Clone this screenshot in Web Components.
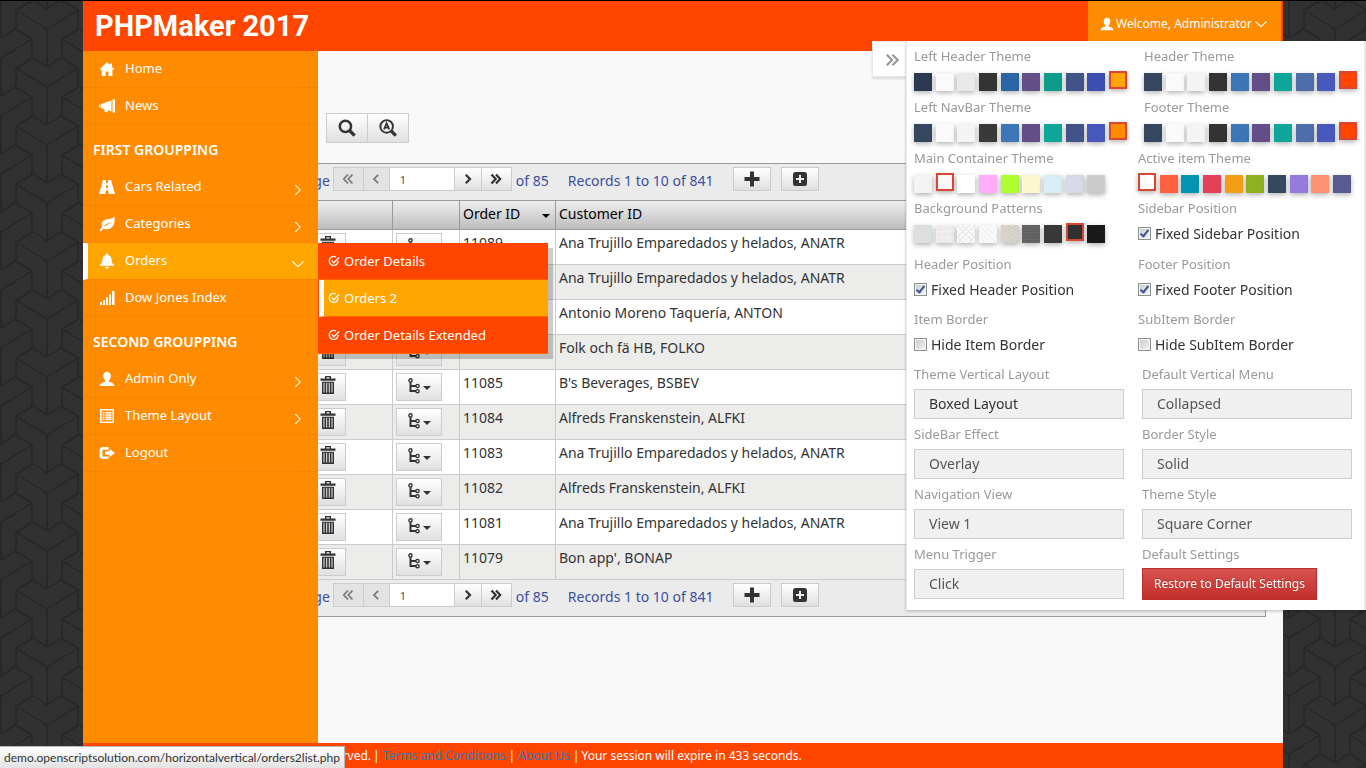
<!DOCTYPE html>
<html lang="en">
<head>
<meta charset="utf-8">
<title>PHPMaker 2017 - Orders</title>
<style>
html,body{margin:0;padding:0;height:100%}
body{box-sizing:border-box;border-top:1px solid #000;background:#303030;overflow:hidden;
font-family:"Noto Sans","Open Sans",sans-serif;font-size:14px;line-height:20px;color:#333}
</style>
</head>
<body>
<cube-backdrop></cube-backdrop>
<app-shell>
  <app-header slot="header"></app-header>
  <side-nav slot="nav">
    <nav-item icon="home">Home</nav-item>
    <nav-item icon="news">News</nav-item>
    <nav-heading>FIRST GROUPPING</nav-heading>
    <nav-item icon="road" arrow="right">Cars Related</nav-item>
    <nav-item icon="leaf" arrow="right">Categories</nav-item>
    <nav-item icon="bell" arrow="down" active>Orders
      <sub-menu slot="menu">
        <sub-item>Order Details</sub-item>
        <sub-item active>Orders 2</sub-item>
        <sub-item>Order Details Extended</sub-item>
      </sub-menu>
    </nav-item>
    <nav-item icon="bars">Dow Jones Index</nav-item>
    <nav-heading>SECOND GROUPPING</nav-heading>
    <nav-item icon="user" arrow="right">Admin Only</nav-item>
    <nav-item icon="list" arrow="right">Theme Layout</nav-item>
    <nav-item icon="logout">Logout</nav-item>
  </side-nav>
  <orders-view></orders-view>
  <page-footer slot="footer"></page-footer>
</app-shell>
<theme-settings></theme-settings>
<link-status>demo.openscriptsolution.com/horizontalvertical/orders2list.php</link-status>

<script>
const ICONS = {
  home:'<path d="M8 1 0.5 8.6h2.2V15h4v-4.6h2.7V15h4V8.6h2.1L13 6V2.4h-2V4z"/>',
  news:'<path d="M0 7 1.500 6.300v3.400L0 9zM2 6 12.500 2.500v11L8.600 12v2.600L5.500 13.800v-2.500L2 10zM13.500 1.500H16v13h-2.500z"/>',
  road:'<path d="M4 1h3v3h2V1h3l4 14H9.6l-.4-3.5H6.8L6.4 15H0zM7.2 6 7 9h2l-.2-3z" fill-rule="evenodd"/>',
  leaf:'<path d="M15.5.8C16 6 15 11 11 12.600c-2.600 1-5 .6-6.500-.1L2 15.500.6 14.200 3 11.300C1.600 7.500 3.800 4.500 7 3.600 10 2.700 13 3.200 15.500.8zM4.800 10.600C7 9.600 10 8.300 12.400 5.600 9 7.600 6 8.400 4 10.800z" fill-rule="evenodd"/>',
  bell:'<path d="M8 0.500c1 0 1.300.7 1.200 1.500C11.500 2.700 12.500 4.500 12.600 7c.1 2.300.5 3.300 2.200 4.600.5.5.3 1.200-.4 1.200H1.600c-.7 0-.9-.7-.4-1.200C2.900 10.300 3.300 9.300 3.400 7c.1-2.500 1.100-4.300 3.400-5C6.700 1.200 7 .5 8 .5zM6 13.700h4C10 15 9 15.600 8 15.600S6 15 6 13.700z"/>',
  bars:'<path d="M1 12h2v3H1zM4 10h2v5H4zM7 7.500h2V15H7zM10 4.500h2V15h-2zM13 1h2.500v14H13z"/>',
  user:'<path d="M8 .8c2.400 0 3.800 1.700 3.800 4 0 2-.8 3.700-1.900 4.700v1.300c2.500.9 4.700 1.400 5.100 2.800.2.700.2 1.200.2 1.400H.8c0-.3 0-.8.2-1.400.4-1.400 2.600-1.900 5.100-2.800V9.500c-1.100-1-1.900-2.700-1.900-4.700 0-2.300 1.400-4 3.800-4z"/>',
  list:'<path d="M1 1h14v14H1zM2.500 2.500v11h11v-11zM3.500 4h2v1.500h-2zM6.500 4h6v1.500h-6zM3.500 6.200h2v1.500h-2zM6.500 6.200h6v1.500h-6zM3.500 8.400h2v1.500h-2zM6.500 8.400h6v1.500h-6zM3.500 10.600h2v1.500h-2zM6.500 10.600h6v1.500h-6z" fill-rule="evenodd"/>',
  logout:'<path d="M9.500 2v2.800H4.500c-.8 0-1 .3-1 1v4.600c0 .7.200 1 1 1h5V14H4.300C1.700 14 .5 12.800.5 10.500v-5C.5 3.200 1.700 2 4.300 2zM10.500 4 16 8l-5.500 4V9.700H6.200V6.300h4.300z"/>',
  right:'<path d="M5 2.500 10.500 8 5 13.500" fill="none" stroke="currentColor" stroke-width="1.200"/>',
  down:'<path d="M1.500 5 8 11l6.500-6" fill="none" stroke="currentColor" stroke-width="1.300"/>',
  tick:'<path d="M13.600 8A6 6 0 1 1 10.500 2.600M4.800 7.200 7.800 10.400 14.800 3.400" fill="none" stroke="currentColor" stroke-width="1.700"/>',
  search:'<circle cx="6.600" cy="6.600" r="5" fill="none" stroke="currentColor" stroke-width="2.200"/><path d="M10.300 10.300 14.800 14.800" stroke="currentColor" stroke-width="3"/>',
  searcha:'<circle cx="6.800" cy="6.600" r="5.600" fill="none" stroke="currentColor" stroke-width="1.700"/><path d="M10.800 10.600 15 14.800" stroke="currentColor" stroke-width="3"/><path d="M4.400 9.300 6.800 3.700 9.200 9.300M5.200 7.600h3.200" fill="none" stroke="currentColor" stroke-width="1.500"/>',
  first:'<path d="M8 3.500 3.800 8 8 12.500M12.500 3.500 8.300 8l4.200 4.500" fill="none" stroke="currentColor" stroke-width="1.700"/>',
  prev:'<path d="M10.200 3.800 6 8l4.200 4.200" fill="none" stroke="currentColor" stroke-width="1.700"/>',
  next:'<path d="M5.800 3.800 10 8l-4.200 4.200" fill="none" stroke="currentColor" stroke-width="2.200"/>',
  last:'<path d="M3.500 3.500 7.700 8l-4.200 4.500M8 3.500 12.200 8 8 12.500" fill="none" stroke="currentColor" stroke-width="2.200"/>',
  shut:'<path d="M2 2 8 8l-6 6M8.500 2l6 6-6 6" fill="none" stroke="currentColor" stroke-width="2.600"/>',
  plus:'<path d="M6 .5h4V6h5.500v4H10v5.500H6V10H.5V6H6z"/>',
  plusbox:'<path d="M3.500 1h9A2.500 2.500 0 0 1 15 3.500v9a2.500 2.500 0 0 1-2.500 2.500h-9A2.500 2.500 0 0 1 1 12.500v-9A2.500 2.500 0 0 1 3.500 1zM7 4v3H4v2h3v3h2V9h3V7H9V4z" fill-rule="evenodd"/>',
  trash:'<path d="M5 0h6v2.200H15.500V4.200H.5v-2H5zM6.500 1.200v1h3v-1zM2 5h12V16H2zM3.500 6v8.700h1V6zM6.200 6v8.700h1V6zM8.800 6v8.700h1V6zM11.500 6v8.700h1V6z" fill-rule="evenodd"/>',
  tree:'<path d="M3.500 4.200v8.800h5.500M3.500 8h5.500" fill="none" stroke="currentColor" stroke-width="2"/><g fill="none" stroke="currentColor" stroke-width="1.400"><circle cx="3.500" cy="2.400" r="1.600"/><circle cx="10.500" cy="8" r="1.600"/><circle cx="10.500" cy="13.200" r="1.600"/></g>'
};
/* Registers an element whose open shadow root is cloned from a template. */
function element(name, css, html, setup){
  customElements.define(name, class extends HTMLElement{
    connectedCallback(){
      if(this.shadowRoot) return;
      const t=document.createElement('template');
      t.innerHTML=`<style>*{box-sizing:border-box}button,input,select{font:inherit;color:inherit;margin:0}${css}</style>`+
        (typeof html==='function'?html(this):html);
      this.attachShadow({mode:'open'}).append(t.content.cloneNode(true));
      if(setup) setup(this);
    }
  });
}
const icon=(n,s='')=>`<glyph-icon name="${n}" ${s}></glyph-icon>`;

element('glyph-icon',`:host{display:inline-block;width:16px;height:16px;flex:none}svg{display:block;width:100%;height:100%}`,
  h=>`<svg viewBox="0 0 16 16" preserveAspectRatio="none" fill="currentColor" aria-hidden="true">${ICONS[h.getAttribute('name')]}</svg>`);

element('cube-backdrop',`:host{position:fixed;inset:1px 0 0 0;z-index:-1;background:#313131}svg{display:block;width:100%;height:100%}`,
  `<svg aria-hidden="true"><defs>
    <g id="y" fill="none" stroke="#282828" stroke-width="2"><path d="M-31-19V1M31-19V1M-31-19 0 0 31-19M0 0V38M-15 10V28L0 38 15 28V10M-31-19-15-29M31-19 15-29M-15 10-31 1M15 10 31 1"/></g>
    <pattern id="p" width="92" height="58" patternUnits="userSpaceOnUse">
      <use href="#y" x="47" y="28"/><use href="#y" x="47" y="-30"/><use href="#y" x="47" y="86"/>
      <use href="#y" x="1" y="57"/><use href="#y" x="1" y="-1"/><use href="#y" x="93" y="57"/><use href="#y" x="93" y="-1"/>
    </pattern></defs><rect width="100%" height="100%" fill="url(#p)"/></svg>`);

element('app-shell',`:host{display:flex;flex-direction:column;height:100%;max-width:1200px;margin:0 auto;background:#f9f9f9}
  .body{flex:1;display:grid;min-height:0}
  slot[name=nav]::slotted(*){grid-area:1/1;justify-self:start;z-index:2}
  .body slot:not([name])::slotted(*){grid-area:1/1}`,
  `<slot name="header"></slot><div class="body"><slot></slot><slot name="nav"></slot></div><slot name="footer"></slot>`);

element('app-header',`:host{display:flex;justify-content:space-between;height:50px;background:#ff4500;color:#fff;padding-right:2px}
  h1{margin:0;padding-left:12px;font:bold 29px/50px "Roboto",sans-serif}
  a{display:flex;align-items:center;gap:2px;width:193px;padding:0 12px;background:#ff8c00;color:#fff;text-decoration:none;font-size:12px;padding-bottom:4px}
  glyph-icon{width:14px;height:14px}`,
  `<h1>PHPMaker 2017</h1><a href="#">${icon('user')}<span>Welcome, Administrator</span>${icon('down')}</a>`);

element('side-nav',`:host{display:block;width:235px;background:#ff8c00;color:#fff;font-size:13px}`,`<nav><slot></slot></nav>`);

element('nav-heading',`:host{display:block}h2{margin:0;padding:5px 10px 0;font:inherit;font-size:14px;font-weight:600;line-height:39px}`,`<h2><slot></slot></h2>`);

element('nav-item',`:host{display:block;position:relative}
  a{display:flex;align-items:center;height:37px;padding:0 13px 0 16px;border-bottom:1px solid #fb8100;color:inherit;text-decoration:none}
  span{flex:1;padding:0 0 2px 10px}
  .arrow{width:14px;height:14px;margin-top:5px}
  :host([active]) a{background:#ffa500;border-left:5px solid #fff;padding-left:11px}
  ::slotted(sub-menu){position:absolute;left:100%;top:0}`,
  h=>`<a href="#">${icon(h.getAttribute('icon'))}<span><slot></slot></span>${h.hasAttribute('arrow')?icon(h.getAttribute('arrow'),'class="arrow"'):''}</a><slot name="menu"></slot>`);

element('sub-menu',`:host{display:block;width:230px;background:#ff4500;box-shadow:5px 5px 0 rgba(0,0,0,.2)}`,`<slot></slot>`);

element('sub-item',`:host{display:block}
  a{display:flex;align-items:center;gap:4px;height:37px;padding:0 10px;border-bottom:1px solid #ff6a00;color:#fff;text-decoration:none}
  glyph-icon{width:12px;height:12px}
  :host([active]) a{margin-left:1px;background:#ffa500;border-left:5px solid #fff;padding-left:4px}`,
  `<a href="#">${icon('tick')}<span><slot></slot></span></a>`);

element('pager-bar',`:host{display:flex;align-items:flex-start;height:36px;padding:3px 0 0 196px;color:#3c4f9d;background:#ebebeb}
  button{height:24px;border:1px solid #ccc;background:linear-gradient(#fff,#e0e0e0);color:#333;padding:0;display:grid;place-items:center}
  form{display:flex;margin:0 4px 0 3px}
  form>*+*{margin-left:-1px!important}
  form button{width:28px}
  form button.end{width:31px}
  form button[disabled]{width:27px;background:#e3e3e3;color:#777}
  form button.end[disabled]{width:31px}
  input{width:66px;height:24px;border:1px solid #ccc;padding:0 10px;font-size:11px;color:#555;background:#fff;outline:0}
  span,label{line-height:28px}
  .records{margin:0 20px 0 19px}
  .add{width:38px;margin-right:10px}`,
  h=>`<label for="page">Page</label><form><button class="end" type="button" disabled aria-label="First">${icon('first')}</button><button type="button" disabled aria-label="Previous">${icon('prev')}</button><input id="page" value="1"><button type="button" aria-label="Next">${icon('next')}</button><button class="end" type="button" aria-label="Last">${icon('last')}</button></form><span>of 85</span><span class="records">Records 1 to 10 of 841</span><button class="add" type="button" aria-label="Add">${icon('plus')}</button><button class="add" type="button" aria-label="Inline add">${icon('plusbox')}</button>`);

const ROWS=[['11089','Ana Trujillo Emparedados y helados, ANATR'],['11088','Ana Trujillo Emparedados y helados, ANATR'],['11087','Antonio Moreno Taquería, ANTON'],['11086','Folk och fä HB, FOLKO'],['11085',"B's Beverages, BSBEV"],['11084','Alfreds Franskenstein, ALFKI'],['11083','Ana Trujillo Emparedados y helados, ANATR'],['11082','Alfreds Franskenstein, ALFKI'],['11081','Ana Trujillo Emparedados y helados, ANATR'],['11079',"Bon app', BONAP"]];

element('orders-view',`:host{display:block;padding:62px 17px 0;min-width:0}
  .tools{display:flex;padding-left:226px;margin-bottom:20px}
  button{border:1px solid #ccc;background:linear-gradient(#fff,#e0e0e0);color:#333;padding:0;display:flex;align-items:center;justify-content:center}
  .tools button{width:42px;height:30px}
  .tools button+button{margin-left:-1px}
  .tools glyph-icon{width:18px;height:18px}
  .grid{border:1px solid #999}
  table{width:100%;table-layout:fixed;border-collapse:separate;border-spacing:0}
  th{height:30px;padding:0 3px 3px;text-align:left;font-weight:400;color:#000;border:solid #999;border-width:1px 0 1px 1px;background:linear-gradient(#efefef,#bdbdbd)}
  td{height:35px;padding:3px;vertical-align:top;border:solid #cbcbcb;border-width:0 0 1px 1px;background:#fff}
  tr:nth-child(even) td{background:#ececea}
  th:first-child,td:first-child{border-left:0}
  .ops{width:291px}.det{width:67px}.id{width:96px}
  .sort{display:flex;justify-content:space-between;align-items:center}
  .caret{width:0;border:4px solid transparent;border-top-color:currentColor;border-bottom:0}
  .sort .caret{margin:4px 2px 0 0}
  td:first-child{padding-left:209px}
  .del{width:36px;height:28px;padding-bottom:4px}.del glyph-icon{height:18px}
  .tree{width:46px;height:28px;padding-bottom:2px}
  .tree .caret{margin-top:4px}`,
  ()=>`<div class="tools"><button type="button" aria-label="Search">${icon('search')}</button><button type="button" aria-label="Advanced search">${icon('searcha')}</button></div>
  <div class="grid"><pager-bar></pager-bar><table><thead><tr><th class="ops"></th><th class="det"></th><th class="id"><div class="sort">Order ID<i class="caret"></i></div></th><th>Customer ID</th></tr></thead><tbody>${ROWS.map(r=>`<tr><td><button class="del" type="button" aria-label="Delete">${icon('trash')}</button></td><td><button class="tree" type="button" aria-label="Details">${icon('tree')}<i class="caret"></i></button></td><td>${r[0]}</td><td>${r[1]}</td></tr>`).join('')}</tbody></table><pager-bar></pager-bar></div>`);

element('page-footer',`:host{display:flex;gap:2px;height:25px;line-height:25px;background:#ff4500;color:#fff;font-size:12px;z-index:1}
  .copy{width:288px;text-align:right;white-space:nowrap}
  a{margin:0 1px;color:#337ab7;text-decoration:none}`,
  `<span class="copy">All rights reserved.</span><span>|</span><a href="#">Terms and Conditions</a><span>|</span><a href="#">About Us</a><span>|</span><span>Your session will expire in 433 seconds.</span>`);

element('link-status',`:host{position:fixed;left:0;bottom:0;z-index:5;height:22px;padding:0 4px;border:solid #b8b8b8;border-width:1px 1px 0 0;box-sizing:border-box;background:linear-gradient(#fff,#e2e2e2);font:12px/22px "Lato",sans-serif;color:#333;white-space:nowrap}`,`<slot></slot>`);

element('swatch-row',`:host{display:grid;grid-template-columns:repeat(10,18px);justify-content:space-between;width:213px;height:20px}
  button{width:18px;height:18px;padding:0;border:0;align-self:end;box-shadow:0 2px 5px rgba(0,0,0,.3)}
  button.on{align-self:start;border:2px solid #d94632}`,
  h=>{const on=+h.getAttribute('selected');return h.getAttribute('colors').split(' ').map((c,i)=>`<button type="button" aria-label="${c}" class="${i===on?'on':''}" style="background:${TEX[c]||c}"></button>`).join('')});

var TEX={
  paper:'#dcdfde',
  plaid:'repeating-linear-gradient(90deg,#f6eeee 0 1px,transparent 1px 6px),repeating-linear-gradient(#f8f0f0 0 1px,transparent 1px 6px),#e9eaec',
  weave:'repeating-linear-gradient(45deg,#eaeaea 0 1px,transparent 1px 4px),repeating-linear-gradient(-45deg,#eaeaea 0 1px,transparent 1px 4px),#fcfcfc',
  hatch:'repeating-linear-gradient(45deg,#f0f0f0 0 1px,transparent 1px 4px),#f9f9f9',
  sand:'repeating-linear-gradient(30deg,#d0cbc2 0 1px,transparent 1px 3px),#dad5cd',
  denim:'repeating-linear-gradient(#5e5e5e 0 1px,transparent 1px 3px),#656565',
  coal:'repeating-linear-gradient(60deg,#333 0 1px,transparent 1px 3px),#3a3a3a',
  carbon:'repeating-linear-gradient(45deg,#151515 0 1px,transparent 1px 3px),#1c1c1c'
};

element('option-check',`:host{display:block}
  label{display:flex;align-items:center;gap:4px;padding-top:1px}
  input{appearance:none;width:13px;height:13px;margin-bottom:2px;border:1px solid #8e8f8f;background:linear-gradient(135deg,#c4c9cd,#f6f6f6);box-shadow:inset 0 0 0 1px #f4f4f4;display:grid;place-items:center}
  input:checked::after{content:"";width:3px;height:7px;margin-bottom:2px;border:solid #3f5196;border-width:0 2px 2px 0;transform:rotate(38deg)}`,
  h=>`<label><input type="checkbox" ${h.hasAttribute('checked')?'checked':''}><slot></slot></label>`);

element('option-select',`:host{display:block}
  label{display:block;color:#999;font-size:13px;margin-bottom:5px}
  select{appearance:none;display:block;width:210px;height:30px;padding:0 14px;border:1px solid #ccc;border-radius:0;background:#f0f0f0;color:#555;font-size:14px}
  :host([strong]) select{color:#333}`,
  h=>`<label for="s">${h.getAttribute('label')}</label><select id="s"><option>${h.getAttribute('value')}</option></select>`);

element('option-block',`:host{display:block}div{color:#999;font-size:13px;margin-bottom:5px}`,h=>`<div>${h.getAttribute('label')}</div><slot></slot>`);

const sw=(l,on,c)=>`<option-block label="${l}"><swatch-row selected="${on}" colors="${c}"></swatch-row></option-block>`;
const ck=(l,t,on)=>`<option-block label="${l}"><option-check ${on?'checked':''}>${t}</option-check></option-block>`;
const se=(l,v,x='')=>`<option-select label="${l}" value="${v}" ${x}></option-select>`;

element('theme-settings',`:host{position:fixed;right:0;top:41px;z-index:4;display:flex;align-items:flex-start}
  .toggle{width:34px;height:36px;display:grid;place-items:center;padding:0;border:1px solid #e8e8e8;border-right:0;background:#fff;color:#999;box-shadow:0 2px 2px rgba(0,0,0,.12)}
  .toggle glyph-icon{width:14px;height:14px;margin:1px 0 0 5px}
  section{width:460px;padding:5px 0 6px 7px;background:#fff;border:solid #e8e8e8;border-width:0 2px 0 1px;box-shadow:0 1px 3px rgba(0,0,0,.25)}
  .g{display:grid}
  .themes{grid-template-columns:230px 1fr;grid-auto-rows:51px}
  .marks{grid-template-columns:224px 1fr;grid-template-rows:50px 56px;grid-auto-rows:55px}
  .picks{grid-template-columns:228px 1fr;grid-auto-rows:60px}
  h3{margin:0 0 4px;font:inherit;font-size:13px;color:#999}
  .reset{width:175px;height:32px;padding:0;border:1px solid #b92c28;background:linear-gradient(#d9534f,#c12e2a);color:#fff;font-size:12px;text-shadow:0 -1px 0 rgba(0,0,0,.2)}`,
  `<button class="toggle" type="button" aria-label="Close settings">${icon('shut')}</button><section>
  <div class="g themes">
  ${sw('Left Header Theme',9,'#2b3a52 #fafafa #e9e9e9 #333 #2a65a6 #634e8a #0d9b8c #425487 #3c4eb0 #ffa500')}
  ${sw('Header Theme',9,'#35475f #fafafa #f4f4f4 #333 #3c76b6 #634e8a #0da698 #4d6ea8 #4858bc #ff4500')}
  ${sw('Left NavBar Theme',9,'#35475f #fafafa #f4f4f4 #393939 #3c76b6 #634e8a #0da698 #425487 #4858bc #ff8c00')}
  ${sw('Footer Theme',9,'#35475f #fafafa #f4f4f4 #333 #3c76b6 #634e8a #0da698 #4d6ea8 #4858bc #ff4500')}
  </div><div class="g marks">
  ${sw('Main Container Theme',1,'#f4f4f4 #f9f9f9 #fff #ffadf9 #adff2f #fcf7ce #d9edf5 #d6d9e6 #ccc')}
  ${sw('Active item Theme',0,'#fff #ff603d #0295b3 #e44158 #f39e15 #8fb021 #34495e #967adc #ff9273 #575b91')}
  ${sw('Background Patterns',7,'paper plaid weave hatch sand denim coal #303030 carbon')}
  ${ck('Sidebar Position','Fixed Sidebar Position',1)}
  ${ck('Header Position','Fixed Header Position',1)}
  ${ck('Footer Position','Fixed Footer Position',1)}
  ${ck('Item Border','Hide Item Border')}
  ${ck('SubItem Border','Hide SubItem Border')}
  </div><div class="g picks">
  ${se('Theme Vertical Layout','Boxed Layout','strong')}${se('Default Vertical Menu','Collapsed')}
  ${se('SideBar Effect','Overlay')}${se('Border Style','Solid')}
  ${se('Navigation View','View 1')}${se('Theme Style','Square Corner')}
  ${se('Menu Trigger','Click')}<div><h3>Default Settings</h3><button class="reset" type="button">Restore to Default Settings</button></div>
  </div></section>`);
</script>
</body>
</html>
